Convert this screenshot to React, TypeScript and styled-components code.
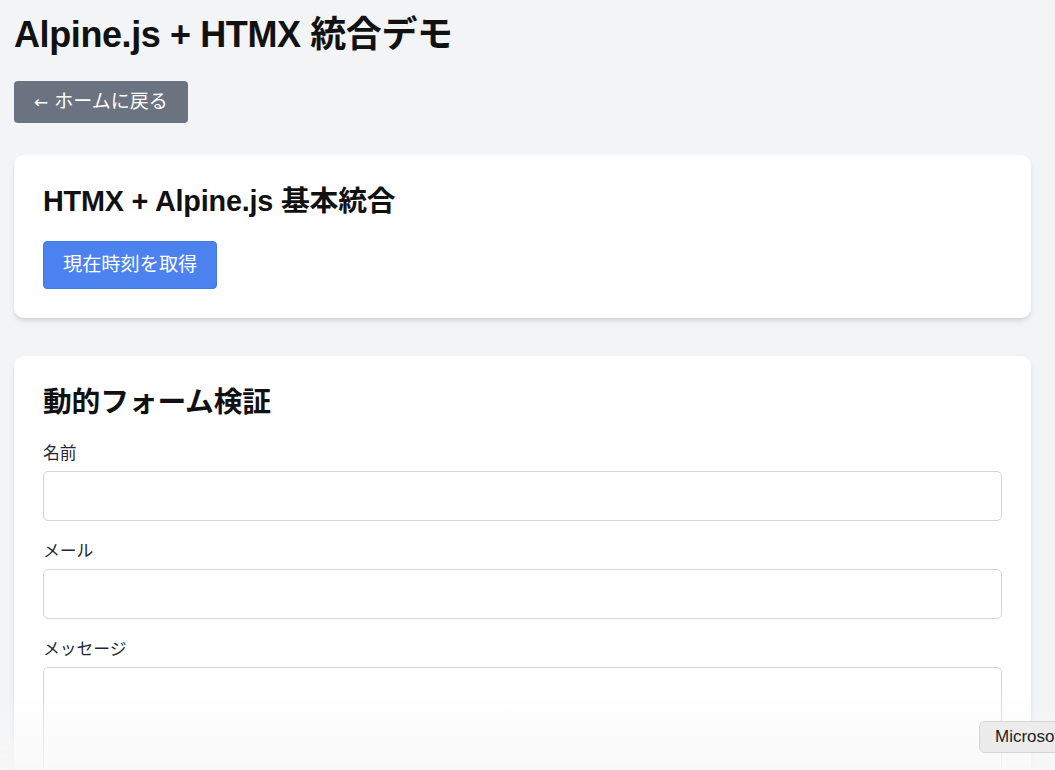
import React from "react";
import styled, { createGlobalStyle } from "styled-components";

const Global = createGlobalStyle`
  html, body { margin: 0; padding: 0; overflow: hidden; }
  body {
    background: #f3f4f6;
    font-family: "Liberation Sans", "Noto Sans CJK JP", Arial, sans-serif;
    color: #111827;
  }
`;

const Page = styled.div`
  display: flex;
  flex-direction: column;
  align-items: flex-start;
  padding: 13px 24px 0 14px;
`;

const Title = styled.h1`
  margin: 0;
  font-size: 36px;
  line-height: 43px;
  font-weight: 700;
  letter-spacing: -0.4px;
  color: #111;
`;

const BackButton = styled.button`
  margin-top: 25px;
  height: 42px;
  padding: 0 20px 0 20px;
  border: none;
  border-radius: 4px;
  background: #6b7280;
  color: #fff;
  font-family: inherit;
  font-size: 19px;
  line-height: 24px;
  display: flex;
  align-items: center;
  gap: 6px;
`;

const Arrow = styled.span`
  font-family: "DejaVu Sans", sans-serif;
  font-size: 17px;
`;

const Card = styled.section<{ $top: number }>`
  align-self: stretch;
  margin-top: ${(p) => p.$top}px;
  background: #fff;
  border-radius: 10px;
  padding: 29px 29px 29px;
  box-shadow: 0 4px 6px -1px rgba(0, 0, 0, 0.1), 0 2px 4px -2px rgba(0, 0, 0, 0.1);
`;

const CardTitle = styled.h2`
  margin: 0 0 23px;
  font-size: 28.8px;
  line-height: 34px;
  font-weight: 700;
  letter-spacing: -0.2px;
  color: #111;
`;

const PrimaryButton = styled.button`
  height: 48px;
  padding: 0 19px;
  border: 1px solid #3f78ec;
  border-radius: 4px;
  background: #4b82f0;
  color: #fff;
  font-family: inherit;
  font-size: 19.2px;
  line-height: 28px;
`;

const Field = styled.div`
  display: flex;
  flex-direction: column;
  margin-bottom: 19px;
`;

const Label = styled.label`
  font-size: 16.8px;
  line-height: 24px;
  color: #1f2937;
  margin-bottom: 5px;
`;

const Input = styled.input`
  height: 50px;
  box-sizing: border-box;
  border: 1px solid #d1d5db;
  border-radius: 5px;
  padding: 8px 12px;
  font-family: inherit;
  font-size: 19px;
  background: #fff;
`;

const TextArea = styled.textarea`
  height: 140px;
  box-sizing: border-box;
  border: 1px solid #d1d5db;
  border-radius: 5px;
  padding: 8px 12px;
  font-family: inherit;
  font-size: 19px;
  resize: none;
  background: #fff;
`;

const Fade = styled.div`
  position: fixed;
  left: 0;
  right: 0;
  bottom: 0;
  height: 80px;
  pointer-events: none;
  background: linear-gradient(to bottom, rgba(250, 250, 250, 0), rgba(248, 248, 248, 0.85));
`;

const TipClip = styled.div`
  position: fixed;
  left: 979px;
  right: 0;
  top: 721px;
  height: 34px;
  overflow: hidden;
`;

const Tip = styled.div`
  box-sizing: border-box;
  height: 32px;
  width: 160px;
  padding: 0 15px;
  display: flex;
  align-items: center;
  white-space: nowrap;
  background: #ececec;
  border: 1px solid #d4d4d4;
  border-radius: 6px;
  font-family: "Liberation Sans", Arial, sans-serif;
  font-size: 17px;
  color: #222;
`;

export default function App() {
  return (
    <>
      <Global />
      <Page>
        <Title>Alpine.js + HTMX 統合デモ</Title>
        <BackButton>
          <Arrow>←</Arrow>
          ホームに戻る
        </BackButton>

        <Card $top={32}>
          <CardTitle>HTMX + Alpine.js 基本統合</CardTitle>
          <PrimaryButton>現在時刻を取得</PrimaryButton>
        </Card>

        <Card $top={38}>
          <CardTitle>動的フォーム検証</CardTitle>
          <Field>
            <Label>名前</Label>
            <Input type="text" />
          </Field>
          <Field>
            <Label>メール</Label>
            <Input type="email" />
          </Field>
          <Field>
            <Label>メッセージ</Label>
            <TextArea />
          </Field>
        </Card>
      </Page>
      <Fade />
      <TipClip>
        <Tip>Microsoft Edge</Tip>
      </TipClip>
    </>
  );
}
